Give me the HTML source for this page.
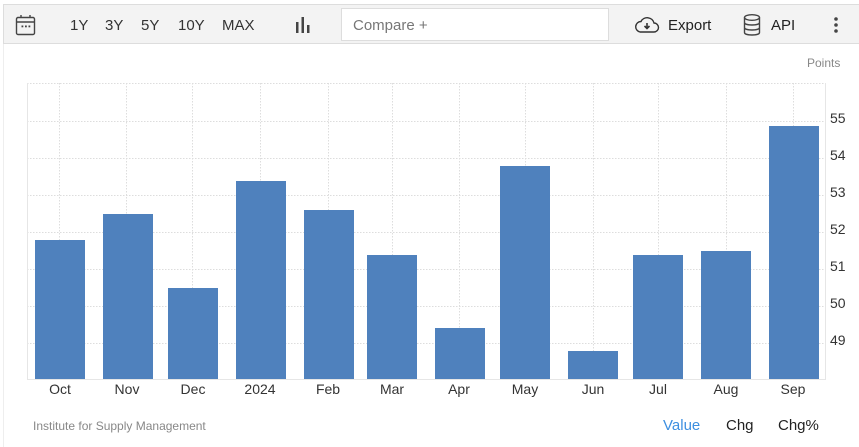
<!DOCTYPE html>
<html><head><meta charset="utf-8"><style>
body{margin:0;width:859px;height:447px;background:#fff;font-family:"Liberation Sans",Arial,sans-serif;position:relative;overflow:hidden}
.tb{position:absolute;left:3px;top:4px;width:856px;height:40px;background:#f3f3f3;border:1px solid #ddd;border-right:none;box-sizing:border-box}
.t{position:absolute;top:17px;font-size:15px;color:#333}
.cmp{position:absolute;left:341px;top:8px;width:268px;height:33px;background:#fff;border:1px solid #ddd;box-sizing:border-box;font-size:15px;color:#777;padding:8px 0 0 11px}
.side{position:absolute;left:3px;top:44px;width:1px;height:403px;background:#eee}
</style></head><body>
<div class="tb"></div>
<div class="side"></div>
<svg style="position:absolute;left:15px;top:14px" width="22" height="22" viewBox="0 0 22 22"><rect x="1.5" y="3.5" width="18" height="17" rx="1.5" fill="none" stroke="#444" stroke-width="1.4"/><line x1="1.5" y1="8" x2="19.5" y2="8" stroke="#444" stroke-width="1.4"/><line x1="6" y1="1" x2="6" y2="4" stroke="#444" stroke-width="1.4"/><line x1="15" y1="1" x2="15" y2="4" stroke="#444" stroke-width="1.4"/><rect x="6.5" y="11.5" width="1.8" height="1.8" fill="#444"/><rect x="10" y="11.5" width="1.8" height="1.8" fill="#444"/><rect x="13.5" y="11.5" width="1.8" height="1.8" fill="#444"/></svg>
<span class="t" style="left:70px">1Y</span><span class="t" style="left:105px">3Y</span><span class="t" style="left:141px">5Y</span><span class="t" style="left:178px">10Y</span><span class="t" style="left:222px">MAX</span>
<svg style="position:absolute;left:294px;top:16px" width="18" height="18"><rect x="2" y="6" width="2.5" height="11" fill="#444"/><rect x="7.5" y="1" width="2.5" height="16" fill="#444"/><rect x="13" y="9" width="2.5" height="8" fill="#444"/></svg>
<div class="cmp">Compare +</div>
<svg style="position:absolute;left:634px;top:15px" width="26" height="20" viewBox="0 0 26 20"><path d="M6 17 H20 A4.5 4.5 0 0 0 20 8 A7 7 0 0 0 7 6.5 A5.3 5.3 0 0 0 6 17 Z" fill="none" stroke="#333" stroke-width="1.4"/><path d="M13 8 V13 M10.5 11 L13 13.5 L15.5 11" fill="none" stroke="#333" stroke-width="1.6"/></svg>
<span class="t" style="left:668px;color:#222">Export</span>
<svg style="position:absolute;left:743px;top:14px" width="18" height="22" viewBox="0 0 18 22"><ellipse cx="9" cy="3.5" rx="7.5" ry="2.8" fill="none" stroke="#444" stroke-width="1.4"/><path d="M1.5 3.5V18.5C1.5 20 4.5 21 9 21S16.5 20 16.5 18.5V3.5M1.5 8.5C1.5 10 4.5 11 9 11S16.5 10 16.5 8.5M1.5 13.5C1.5 15 4.5 16 9 16S16.5 15 16.5 13.5" fill="none" stroke="#444" stroke-width="1.4"/></svg>
<span class="t" style="left:771px;color:#222">API</span>
<svg style="position:absolute;left:832px;top:16px" width="8" height="18"><circle cx="4" cy="3" r="1.8" fill="#444"/><circle cx="4" cy="9" r="1.8" fill="#444"/><circle cx="4" cy="15" r="1.8" fill="#444"/></svg>
<div style="position:absolute;left:807px;top:56px;font-size:12px;color:#888">Points</div>
<svg style="position:absolute;left:0;top:0" width="859" height="447">
<g stroke="#ddd" stroke-dasharray="1.5,1.5" stroke-width="1">
<line x1="27" y1="83.5" x2="825" y2="83.5"/><line x1="27" y1="121.5" x2="825" y2="121.5"/><line x1="27" y1="158.5" x2="825" y2="158.5"/><line x1="27" y1="195.5" x2="825" y2="195.5"/><line x1="27" y1="232.5" x2="825" y2="232.5"/><line x1="27" y1="269.5" x2="825" y2="269.5"/><line x1="27" y1="306.5" x2="825" y2="306.5"/><line x1="27" y1="343.5" x2="825" y2="343.5"/>
<line x1="59.5" y1="83" x2="59.5" y2="379"/><line x1="126.5" y1="83" x2="126.5" y2="379"/><line x1="192.5" y1="83" x2="192.5" y2="379"/><line x1="260.5" y1="83" x2="260.5" y2="379"/><line x1="328.5" y1="83" x2="328.5" y2="379"/><line x1="392.5" y1="83" x2="392.5" y2="379"/><line x1="459.5" y1="83" x2="459.5" y2="379"/><line x1="525.5" y1="83" x2="525.5" y2="379"/><line x1="593.5" y1="83" x2="593.5" y2="379"/><line x1="658.5" y1="83" x2="658.5" y2="379"/><line x1="726.5" y1="83" x2="726.5" y2="379"/><line x1="793.5" y1="83" x2="793.5" y2="379"/>
</g>
<g fill="#4f81bd">
<rect x="35" y="240" width="50" height="139"/><rect x="103" y="214" width="50" height="165"/><rect x="168" y="288" width="50" height="91"/><rect x="236" y="181" width="50" height="198"/><rect x="304" y="210" width="50" height="169"/><rect x="367" y="255" width="50" height="124"/><rect x="435" y="328" width="50" height="51"/><rect x="500" y="166" width="50" height="213"/><rect x="568" y="351" width="50" height="28"/><rect x="633" y="255" width="50" height="124"/><rect x="701" y="251" width="50" height="128"/><rect x="769" y="126" width="50" height="253"/>
</g>
<line x1="27.5" y1="83" x2="27.5" y2="379" stroke="#e6e6e6"/>
<line x1="825.5" y1="83" x2="825.5" y2="379" stroke="#e6e6e6"/>
<line x1="27" y1="379.5" x2="826" y2="379.5" stroke="#e6e6e6"/>
<g font-family="Liberation Sans,Arial,sans-serif" font-size="14" fill="#333">
<text x="830" y="123">55</text><text x="830" y="160">54</text><text x="830" y="197">53</text><text x="830" y="234">52</text><text x="830" y="271">51</text><text x="830" y="308">50</text><text x="830" y="345">49</text>
<g text-anchor="middle"><text x="60" y="394">Oct</text><text x="127" y="394">Nov</text><text x="193" y="394">Dec</text><text x="260" y="394">2024</text><text x="328" y="394">Feb</text><text x="392" y="394">Mar</text><text x="459" y="394">Apr</text><text x="525" y="394">May</text><text x="593" y="394">Jun</text><text x="658" y="394">Jul</text><text x="726" y="394">Aug</text><text x="793" y="394">Sep</text></g>
</g>
<text x="33" y="430" font-family="Liberation Sans,Arial,sans-serif" font-size="12" fill="#888">Institute for Supply Management</text>
<g font-family="Liberation Sans,Arial,sans-serif" font-size="15"><text x="663" y="430" fill="#3d8fe0">Value</text><text x="726" y="430" fill="#222">Chg</text><text x="778" y="430" fill="#222">Chg%</text></g>
</svg>
</body></html>
